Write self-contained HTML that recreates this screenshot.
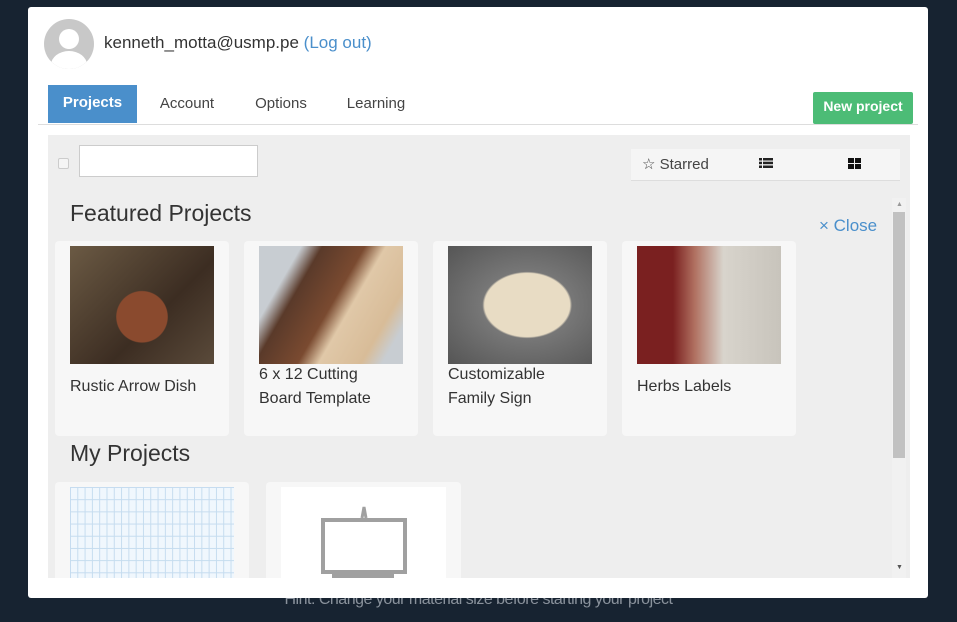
<!DOCTYPE html>
<html><head><meta charset="utf-8"><style>
body{margin:0;width:957px;height:622px;background:#172331;font-family:"Liberation Sans",sans-serif;position:relative;overflow:hidden}
.a{position:absolute}
.modal{left:28px;top:7px;width:900px;height:591px;background:#fff;border-radius:3px}
.hint{left:0;width:957px;top:591px;text-align:center;color:#8a929c;font-size:16px;letter-spacing:-0.5px}
.tab{top:85px;height:38px;line-height:38px;font-size:15px;color:#444;text-align:center}
.card{background:#f7f7f7;border-radius:4px;width:174px;height:195px;top:241px}
.card .img{position:absolute;left:15px;top:5px;width:144px;height:118px}
.card .t{position:absolute;left:15px;font-size:16px;color:#333;line-height:24px}
</style></head><body>
<div class="a hint">Hint: Change your material size before starting your project</div>
<div class="a modal"></div>
<svg class="a" style="left:44px;top:19px" width="50" height="50"><defs><clipPath id="c"><circle cx="25" cy="25" r="25"/></clipPath></defs><circle cx="25" cy="25" r="25" fill="#c8c8c8"/><g clip-path="url(#c)" fill="#fff"><circle cx="25" cy="20" r="10"/><ellipse cx="25" cy="46" rx="18" ry="14"/></g></svg>
<div class="a" style="left:104px;top:33px;font-size:17px;color:#333">kenneth_motta@usmp.pe <span style="color:#4a8fcb">(Log out)</span></div>
<div class="a tab" style="left:48px;width:89px;background:#4a8fcb;color:#fff;font-weight:bold;top:85px;line-height:36px">Projects</div>
<div class="a tab" style="left:147px;width:80px">Account</div>
<div class="a tab" style="left:240px;width:82px">Options</div>
<div class="a tab" style="left:335px;width:82px">Learning</div>
<div class="a" style="left:813px;top:92px;width:100px;height:32px;background:#4cbc76;border-radius:2px;color:#fff;font-weight:bold;font-size:14px;text-align:center;line-height:29px">New project</div>
<div class="a" style="left:38px;top:124px;width:880px;height:1px;background:#ddd"></div>
<div class="a" style="left:48px;top:135px;width:862px;height:443px;background:#eee"></div>
<div class="a" style="left:58px;top:158px;width:9px;height:9px;border:1px solid #ccc;background:#f5f5f5;border-radius:2px"></div>
<div class="a" style="left:79px;top:145px;width:177px;height:30px;border:1px solid #ccc;background:#fff"></div>
<div class="a" style="left:631px;top:149px;width:269px;height:31px;background:#f5f5f5;border-bottom:1px solid #ddd"></div>
<div class="a" style="left:642px;top:155px;font-size:15px;color:#444">☆ Starred</div>
<svg class="a" style="left:759px;top:158px" width="14" height="10"><g fill="#222"><rect x="0" y="0" width="3" height="2.5"/><rect x="4" y="0" width="10" height="2.5"/><rect x="0" y="3.7" width="3" height="2.5"/><rect x="4" y="3.7" width="10" height="2.5"/><rect x="0" y="7.5" width="3" height="2.5"/><rect x="4" y="7.5" width="10" height="2.5"/></g></svg>
<svg class="a" style="left:848px;top:158px" width="13" height="11"><g fill="#111"><rect x="0" y="0" width="6" height="5"/><rect x="7" y="0" width="6" height="5"/><rect x="0" y="6" width="6" height="5"/><rect x="7" y="6" width="6" height="5"/></g></svg>
<div class="a" style="left:70px;top:200px;font-size:23px;color:#333">Featured Projects</div>
<div class="a" style="left:819px;top:216px;font-size:17px;color:#4a8fcb">× Close</div>
<div class="a" style="left:892px;top:198px;width:14px;height:380px;background:#f1f1f1"></div>
<div class="a" style="left:893px;top:212px;width:12px;height:246px;background:#c1c1c1"></div>
<div class="a" style="left:896px;top:201px;font-size:7px;color:#999">▲</div>
<div class="a" style="left:896px;top:564px;font-size:7px;color:#555">▼</div>
<div class="a card" style="left:55px"><div class="img" style="background:radial-gradient(circle at 50% 60%,#8a4a2e 0 25%,transparent 26%),linear-gradient(135deg,#6b5a44,#3c2d22 60%,#5a4a3a)"></div><div class="t" style="top:134px">Rustic Arrow Dish</div></div>
<div class="a card" style="left:244px"><div class="img" style="background:linear-gradient(120deg,#c8cdd2 0 20%,#5a3a2a 30%,#7a4a30 50%,#e0c8a8 60%,#d8bc98 80%,#c8cdd2 90%)"></div><div class="t" style="top:122px">6 x 12 Cutting<br>Board Template</div></div>
<div class="a card" style="left:433px"><div class="img" style="background:radial-gradient(ellipse at 55% 50%,#e8dcc4 0 38%,#777 40%,#555)"></div><div class="t" style="top:122px">Customizable<br>Family Sign</div></div>
<div class="a card" style="left:622px"><div class="img" style="background:linear-gradient(90deg,#7a2020 0 25%,#b07060 40%,#d8d4cc 60%,#c8c4bc)"></div><div class="t" style="top:134px">Herbs Labels</div></div>
<div class="a" style="left:70px;top:440px;font-size:23px;color:#333">My Projects</div>
<div class="a" style="left:55px;top:482px;width:194px;height:96px;background:#f7f7f7;border-radius:4px 4px 0 0"></div>
<div class="a" style="left:70px;top:487px;width:164px;height:91px;background-color:#f0f7fd;background-image:linear-gradient(90deg,#c5dcef 1px,transparent 1px),linear-gradient(#c5dcef 1px,transparent 1px);background-size:7.3px 12.2px"></div>
<div class="a" style="left:266px;top:482px;width:195px;height:96px;background:#f7f7f7;border-radius:4px 4px 0 0"></div>
<div class="a" style="left:281px;top:487px;width:165px;height:91px;background:#fff"></div>
<svg class="a" style="left:320px;top:503px" width="88" height="75"><path d="M42 15 L44 4 L46 15" fill="none" stroke="#a0a0a0" stroke-width="3"/><rect x="3" y="17" width="82" height="52" fill="none" stroke="#a0a0a0" stroke-width="4"/><rect x="12" y="70" width="62" height="5" fill="#a0a0a0"/></svg>
</body></html>
